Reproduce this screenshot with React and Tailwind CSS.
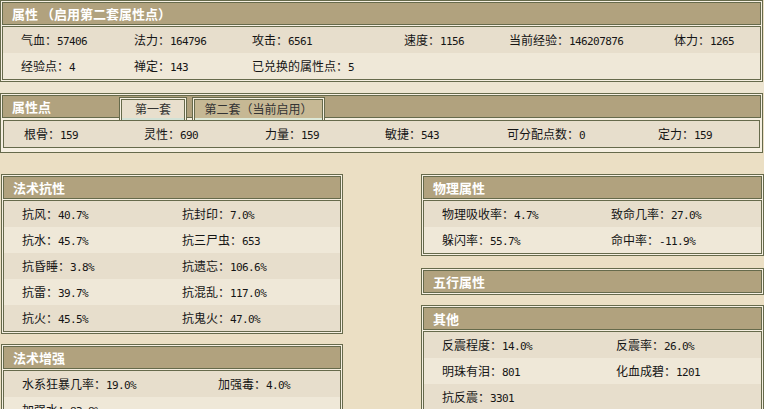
import React from "react";

const topRows = [
  [
    ["气血", "57406"],
    ["法力", "164796"],
    ["攻击", "6561"],
    ["速度", "1156"],
    ["当前经验", "146207876"],
    ["体力", "1265"],
  ],
  [
    ["经验点", "4"],
    ["禅定", "143"],
    ["已兑换的属性点", "5"],
  ],
];

const pointRow = [
  ["根骨", "159"],
  ["灵性", "690"],
  ["力量", "159"],
  ["敏捷", "543"],
  ["可分配点数", "0"],
  ["定力", "159"],
];

const resistRows = [
  [["抗风", "40.7%"], ["抗封印", "7.0%"]],
  [["抗水", "45.7%"], ["抗三尸虫", "653"]],
  [["抗昏睡", "3.8%"], ["抗遗忘", "106.6%"]],
  [["抗雷", "39.7%"], ["抗混乱", "117.0%"]],
  [["抗火", "45.5%"], ["抗鬼火", "47.0%"]],
];

const boostRows = [
  [["水系狂暴几率", "19.0%"], ["加强毒", "4.0%"]],
  [["加强水", "83.8%"]],
];

const physRows = [
  [["物理吸收率", "4.7%"], ["致命几率", "27.0%"]],
  [["躲闪率", "55.7%"], ["命中率", "-11.9%"]],
];

const otherRows = [
  [["反震程度", "14.0%"], ["反震率", "26.0%"]],
  [["明珠有泪", "801"], ["化血成碧", "1201"]],
  [["抗反震", "3301"]],
];

function Stat({ label, value }) {
  return (
    <div className="whitespace-nowrap text-[12px] leading-none text-[#151515]">
      <span className="font-['Noto_Sans_CJK_SC',sans-serif]">{label}：</span>
      <span className="font-['DejaVu_Sans_Mono',monospace] text-[11px] tracking-[-0.6px]">
        {value}
      </span>
    </div>
  );
}

function Rows({ rows, cols }) {
  return (
    <div className="border border-[#666a4b]">
      {rows.map((row, i) => (
        <div
          key={i}
          className={`grid ${cols} h-[26px] items-center pl-[18px] ${
            i % 2 ? "bg-[#efe8d8]" : "bg-[#e7decc]"
          }`}
        >
          {row.map(([label, value]) => (
            <Stat key={label} label={label} value={value} />
          ))}
        </div>
      ))}
    </div>
  );
}

function Header({ title, children }) {
  return (
    <div className="flex h-[23px] border border-[#666a4b] bg-[#b1a27e] pl-[9px]">
      <span className="self-center text-[13px] font-bold text-white font-['Noto_Sans_CJK_SC',sans-serif]">
        {title}
      </span>
      {children}
    </div>
  );
}

function Panel({ title, rows, cols, className = "" }) {
  return (
    <section className={`border border-[#666a4b] bg-[#f6f0e2] p-px ${className}`}>
      <Header title={title} />
      {rows && (
        <div className="mt-px">
          <Rows rows={rows} cols={cols} />
        </div>
      )}
    </section>
  );
}

function Tab({ label, active, width }) {
  return (
    <div
      className={`relative z-10 -mb-[3px] h-[23px] self-end border border-b-0 border-[#666a4b] bg-[#f6f0e2] p-px pb-0 ${width}`}
    >
      <div
        className={`flex h-full flex-col border border-b-0 border-[#666a4b] ${
          active ? "bg-[#e8dfcd]" : "bg-[#c6b894]"
        }`}
      >
        <span className="flex flex-1 items-center justify-center text-[12px] text-[#333] font-['Noto_Sans_CJK_SC',sans-serif]">
          {label}
        </span>
        <div className={`h-[3px] ${active ? "bg-[#d3e2d6]" : "bg-[#dde9d8]"}`} />
      </div>
    </div>
  );
}

export default function App() {
  return (
    <main className="min-h-screen w-[764px] bg-[#ebdfc4] font-['Noto_Sans_CJK_SC',sans-serif]">
      {/* 属性 */}
      <Panel
        title="属性 （启用第二套属性点）"
        rows={topRows}
        cols="grid-cols-[113px_118px_152px_105px_165px_1fr]"
        className="mr-px"
      />

      <div className="h-[11px] bg-[#ede5d1]" />

      {/* 属性点 + tabs */}
      <section className="mr-px border border-[#666a4b] bg-[#f6f0e2] p-px">
        <div className="flex h-[23px] border border-[#666a4b] bg-[#b1a27e] pl-[9px]">
          <span className="w-[107px] self-center text-[13px] font-bold text-white">属性点</span>
          <Tab label="第一套" active width="w-[68px]" />
          <div className="w-[5px]" />
          <Tab label="第二套（当前启用）" width="w-[133px]" />
        </div>
        <div className="px-[1px] pb-[3px] pt-[2px]">
          <div className="grid h-[28px] grid-cols-[120px_121px_120px_122px_151px_1fr] items-center border border-[#666a4b] bg-[#e7decc] pl-[20px]">
            {pointRow.map(([label, value]) => (
              <Stat key={label} label={label} value={value} />
            ))}
          </div>
        </div>
      </section>

      {/* 下方 */}
      <div className="flex justify-between pl-px pt-[21px]">
        <div className="flex w-[342px] flex-col">
          <Panel title="法术抗性" rows={resistRows} cols="grid-cols-[160px_1fr]" />
          <Panel
            title="法术增强"
            rows={boostRows}
            cols="grid-cols-[196px_1fr]"
            className="mt-[10px]"
          />
        </div>
        <div className="flex w-[343px] flex-col">
          <Panel title="物理属性" rows={physRows} cols="grid-cols-[169px_1fr]" />
          <Panel title="五行属性" className="mt-[12px]" />
          <Panel
            title="其他"
            rows={otherRows}
            cols="grid-cols-[174px_1fr]"
            className="mt-[10px]"
          />
        </div>
      </div>
    </main>
  );
}
